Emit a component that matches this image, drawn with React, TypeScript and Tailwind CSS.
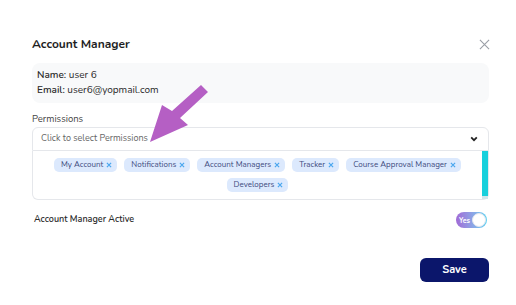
const permissions = [
  'My Account',
  'Notifications',
  'Account Managers',
  'Tracker',
  'Course Approval Manager',
  'Developers',
]

function Chip({ label }: { label: string }) {
  return (
    <span className="flex h-[14px] items-center gap-[3px] rounded-[5px] bg-[#dce9fd] pr-[5px] pl-[7px] text-[8px] leading-none text-[#3e4b7d]">
      {label}
      <svg className="h-[6px] w-[6px] text-[#4aa6ef]" viewBox="0 0 10 10" fill="none" stroke="currentColor" strokeWidth="2">
        <path d="M1.5 1.5l7 7M8.5 1.5l-7 7" />
      </svg>
    </span>
  )
}

export default function App() {
  return (
    <div
      className="relative h-[305px] w-[516px] overflow-hidden bg-white pt-[35px] pr-[27px] pl-[32px] text-[#222]"
      style={{ fontFamily: '"Nunito", "Lato", "Noto Sans", sans-serif' }}
    >
      {/* Header */}
      <div className="flex h-[18px] items-center justify-between">
        <h1 className="text-[12px] font-bold leading-none text-[#1f1f1f]">Account Manager</h1>
        <svg className="mr-[-1px] h-[11px] w-[11px] text-[#9a9ea6]" viewBox="0 0 12 12" fill="none" stroke="currentColor" strokeWidth="1.2">
          <path d="M1 1l10 10M11 1L1 11" />
        </svg>
      </div>

      {/* User info */}
      <div className="mt-[10px] rounded-lg bg-[#f8f9fa] px-[5px] py-[5px] text-[10px] leading-[15px] text-[#2a2a2a]">
        <div>
          <span className="font-semibold">Name:</span> user 6
        </div>
        <div>
          <span className="font-semibold">Email:</span> user6@yopmail.com
        </div>
      </div>

      {/* Permissions */}
      <div className="mt-[9px] text-[9.5px] leading-[13px] text-[#444]">Permissions</div>
      <div className="mt-[2px] flex h-[24px] items-center justify-between rounded-t-md border border-[#e5e7eb] pr-[10px] pl-[8px]">
        <span className="text-[9px] text-[#666]">Click to select Permissions</span>
        <svg className="h-[6px] w-[8px] text-[#222]" viewBox="0 0 10 7" fill="none" stroke="currentColor" strokeWidth="2.2">
          <path d="M1.5 1.5L5 5l3.5-3.5" />
        </svg>
      </div>
      <div className="flex h-[49px] rounded-b-md border border-t-0 border-[#e5e7eb]">
        <div className="flex flex-1 flex-wrap content-start justify-center gap-x-[7px] gap-y-[6px] px-[8px] pt-[7px]">
          {permissions.map((p) => (
            <Chip key={p} label={p} />
          ))}
        </div>
        <div className="flex w-[6px] flex-col">
          <div className="h-[45px] w-[6px] bg-[#17d0dc]" />
          <div className="flex-1 bg-[#cfe6ea]" />
        </div>
      </div>

      {/* Active toggle */}
      <div className="mt-[12px] flex items-center justify-between pr-[2px] pl-[2px]">
        <span className="text-[9px] font-semibold text-[#2a2a2a]">Account Manager Active</span>
        <div className="flex h-[16px] w-[31px] items-center rounded-full bg-gradient-to-r from-[#a06ad6] to-[#5cd3f2] p-[1px]">
          <span className="flex-1 pl-[2px] text-[7px] font-bold leading-none text-white">Yes</span>
          <span className="h-[14px] w-[14px] rounded-full border border-[#e3e6ee] bg-white" />
        </div>
      </div>

      {/* Footer */}
      <div className="mt-[30px] flex justify-end">
        <button className="h-[24px] w-[69px] rounded-md bg-[#0b166b] text-[11px] font-bold text-white">Save</button>
      </div>

      {/* Annotation arrow */}
      <svg className="pointer-events-none absolute top-0 left-0 h-[305px] w-[516px]" viewBox="0 0 516 305">
        <polygon
          points="150,142 188,125 180,118 208,92 201,85 172,111 162,105"
          fill="#b55fc4"
        />
      </svg>
    </div>
  )
}
